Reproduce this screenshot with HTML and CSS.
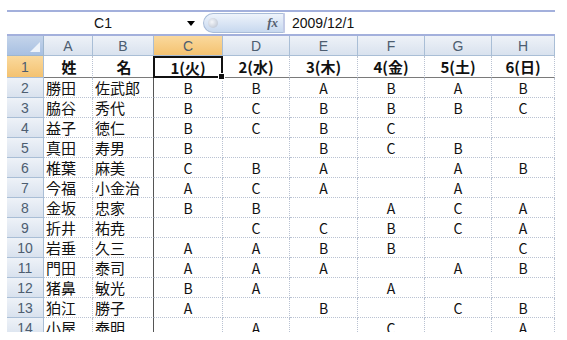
FILE: index.html
```html
<!DOCTYPE html>
<html lang="ja">
<head>
  <meta charset="UTF-8">
  <title>Sheet</title>
  <link rel="stylesheet" href="styles.css">
</head>
<body>

  <div class="window">

    <div class="formula-bar">
      <div class="name-box">
        <span class="name-text">C1</span>
        <span class="drop-arrow"></span>
      </div>
      <div class="fx-button">
        <span class="fx-knob"></span>
        <span class="fx-label">fx</span>
      </div>
      <div class="formula-input">2009/12/1</div>
    </div>

    <div class="sheet">
      <div class="corner"></div>
      <div class="col-head">A</div>
      <div class="col-head">B</div>
      <div class="col-head active">C</div>
      <div class="col-head">D</div>
      <div class="col-head">E</div>
      <div class="col-head">F</div>
      <div class="col-head">G</div>
      <div class="col-head">H</div>

      <div class="row-head active tall">1</div>
      <div class="cell title name">姓</div>
      <div class="cell title name split">名</div>
      <div class="cell title selected">1(火)<span class="handle"></span></div>
      <div class="cell title">2(水)</div>
      <div class="cell title">3(木)</div>
      <div class="cell title">4(金)</div>
      <div class="cell title">5(土)</div>
      <div class="cell title">6(日)</div>

      <div class="row-head">2</div>
      <div class="cell name">勝田</div><div class="cell name split">佐武郎</div>
      <div class="cell">B</div><div class="cell">B</div><div class="cell">A</div><div class="cell">B</div><div class="cell">A</div><div class="cell">B</div>

      <div class="row-head">3</div>
      <div class="cell name">脇谷</div><div class="cell name split">秀代</div>
      <div class="cell">B</div><div class="cell">C</div><div class="cell">B</div><div class="cell">B</div><div class="cell">B</div><div class="cell">C</div>

      <div class="row-head">4</div>
      <div class="cell name">益子</div><div class="cell name split">徳仁</div>
      <div class="cell">B</div><div class="cell">C</div><div class="cell">B</div><div class="cell">C</div><div class="cell"></div><div class="cell"></div>

      <div class="row-head">5</div>
      <div class="cell name">真田</div><div class="cell name split">寿男</div>
      <div class="cell">B</div><div class="cell"></div><div class="cell">B</div><div class="cell">C</div><div class="cell">B</div><div class="cell"></div>

      <div class="row-head">6</div>
      <div class="cell name">椎葉</div><div class="cell name split">麻美</div>
      <div class="cell">C</div><div class="cell">B</div><div class="cell">A</div><div class="cell"></div><div class="cell">A</div><div class="cell">B</div>

      <div class="row-head">7</div>
      <div class="cell name">今福</div><div class="cell name split">小金治</div>
      <div class="cell">A</div><div class="cell">C</div><div class="cell">A</div><div class="cell"></div><div class="cell">A</div><div class="cell"></div>

      <div class="row-head">8</div>
      <div class="cell name">金坂</div><div class="cell name split">忠家</div>
      <div class="cell">B</div><div class="cell">B</div><div class="cell"></div><div class="cell">A</div><div class="cell">C</div><div class="cell">A</div>

      <div class="row-head">9</div>
      <div class="cell name">折井</div><div class="cell name split">祐尭</div>
      <div class="cell"></div><div class="cell">C</div><div class="cell">C</div><div class="cell">B</div><div class="cell">C</div><div class="cell">A</div>

      <div class="row-head">10</div>
      <div class="cell name">岩垂</div><div class="cell name split">久三</div>
      <div class="cell">A</div><div class="cell">A</div><div class="cell">B</div><div class="cell">B</div><div class="cell"></div><div class="cell">C</div>

      <div class="row-head">11</div>
      <div class="cell name">門田</div><div class="cell name split">泰司</div>
      <div class="cell">A</div><div class="cell">A</div><div class="cell">A</div><div class="cell"></div><div class="cell">A</div><div class="cell">B</div>

      <div class="row-head">12</div>
      <div class="cell name">猪鼻</div><div class="cell name split">敏光</div>
      <div class="cell">B</div><div class="cell">A</div><div class="cell"></div><div class="cell">A</div><div class="cell"></div><div class="cell"></div>

      <div class="row-head">13</div>
      <div class="cell name">狛江</div><div class="cell name split">勝子</div>
      <div class="cell">A</div><div class="cell"></div><div class="cell">B</div><div class="cell"></div><div class="cell">C</div><div class="cell">B</div>

      <div class="row-head">14</div>
      <div class="cell name">小屋</div><div class="cell name split">泰明</div>
      <div class="cell"></div><div class="cell">A</div><div class="cell"></div><div class="cell">C</div><div class="cell"></div><div class="cell">A</div>
    </div>

  </div>

</body>
</html>
```

FILE: styles.css
```css
body{
  margin: 0;
  background-color: white;
  font-family: "Liberation Sans", "Noto Sans CJK JP", sans-serif;
}

.window{
  width: 548px;
  height: 322px;
  margin: 10px 0 0 7px;
  overflow: hidden;
}

/* formula bar */

.formula-bar{
  display: flex;
  height: 22px;
  border-top: 2px solid #a3b0dc;
  border-bottom: 2px solid #a3b0dc;
  background-color: white;
}

.name-box{
  width: 196px;
  display: flex;
  align-items: center;
  position: relative;
}

.name-text{
  flex: 1;
  text-align: center;
  font-size: 14px;
  color: #111;
  padding-left: 12px;
}

.drop-arrow{
  width: 0;
  height: 0;
  border-left: 4px solid transparent;
  border-right: 4px solid transparent;
  border-top: 5px solid black;
  margin-right: 8px;
}

.fx-button{
  width: 82px;
  margin-top: 1px;
  height: 20px;
  border-radius: 10px 0 0 10px;
  border: 1px solid #a9bcd8;
  border-right: 2px solid #c3cbe6;
  background: linear-gradient(#eef3fb, #c7d8ef);
  display: flex;
  align-items: center;
  justify-content: space-between;
  padding: 0 5px 0 4px;
  box-sizing: border-box;
}

.fx-knob{
  width: 10px;
  height: 10px;
  border-radius: 50%;
  background: radial-gradient(circle at 40% 40%, #f4f6fa, #b3bccb);
}

.fx-label{
  font-family: "Liberation Serif", serif;
  font-style: italic;
  font-weight: bold;
  font-size: 13px;
  color: #555f70;
}

.formula-input{
  flex: 1;
  font-size: 14px;
  color: #111;
  padding-left: 7px;
  line-height: 22px;
}

/* sheet grid */

.sheet{
  display: grid;
  grid-template-columns: 37px 49px 61px 69px 67px 68px 67px 67px 63px;
  grid-auto-rows: 20px;
  grid-template-rows: 20px 22px;
}

.corner{
  background: linear-gradient(#c4d4ea, #a8c0e2);
  border-right: 1px solid #9eb6ce;
  border-bottom: 1px solid #9eb6ce;
  position: relative;
}

.corner::after{
  content: "";
  position: absolute;
  right: 3px;
  bottom: 3px;
  border-left: 10px solid transparent;
  border-bottom: 10px solid #eef3fa;
}

.col-head,
.row-head{
  background: linear-gradient(#eef2f8, #d9e2ee);
  color: #4d5d70;
  font-size: 14px;
  display: flex;
  align-items: center;
  justify-content: center;
  border-right: 1px solid #a9bed6;
  border-bottom: 1px solid #a9bed6;
}

.col-head.active,
.row-head.active{
  background: linear-gradient(#fad99d, #f4c270);
  color: #4d5d70;
}

.cell{
  font-size: 14px;
  color: #111;
  display: flex;
  align-items: center;
  justify-content: center;
  border-right: 1px dotted #b9c2d2;
  border-bottom: 1px dotted #b9c2d2;
  white-space: nowrap;
  font-family: "Noto Sans CJK JP", "Liberation Sans", sans-serif;
}

.cell.name{
  justify-content: flex-start;
  padding-left: 2px;
  font-size: 15px;
}

.cell.split{
  border-right: 1px solid #555;
}

.cell.title{
  font-weight: bold;
  font-size: 15px;
  border-bottom: 1px solid #7a7a7a;
}

.cell.title.name{
  justify-content: center;
}

.cell.selected{
  border: 2px solid #111;
  margin-left: -1px;
  position: relative;
}

.handle{
  position: absolute;
  right: -4px;
  bottom: -4px;
  width: 5px;
  height: 5px;
  background-color: #111;
  border: 1px solid white;
}
```
